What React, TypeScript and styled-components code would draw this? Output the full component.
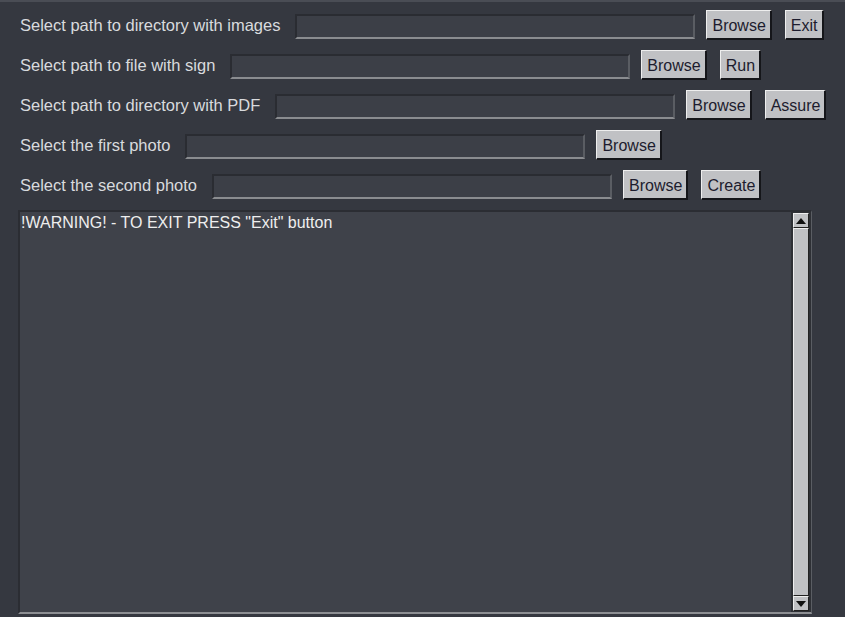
import React from "react";
import styled, { createGlobalStyle } from "styled-components";

const GlobalStyle = createGlobalStyle`
  html, body {
    margin: 0;
    padding: 0;
    background: #353840;
    overflow: hidden;
  }
  body {
    font-family: "Liberation Sans", Arial, sans-serif;
  }
`;

interface RowSpec {
  label: string;
  extra?: string;
}

const rows: RowSpec[] = [
  { label: "Select path to directory with images", extra: "Exit" },
  { label: "Select path to file with sign", extra: "Run" },
  { label: "Select path to directory with PDF", extra: "Assure" },
  { label: "Select the first photo" },
  { label: "Select the second photo", extra: "Create" },
];

function App() {
  return (
    <Window>
      <GlobalStyle />
      {rows.map((row) => (
        <Row key={row.label}>
          <Label>{row.label}</Label>
          <Entry />
          <Button>Browse</Button>
          {row.extra && <Button>{row.extra}</Button>}
        </Row>
      ))}
      <LogBox>
        <LogText>!WARNING! - TO EXIT PRESS "Exit" button</LogText>
        <ScrollBar>
          <Arrow>
            <svg width="10" height="6" viewBox="0 0 10 6">
              <path d="M0 6 L5 0 L10 6 Z" fill="#111" />
            </svg>
          </Arrow>
          <Thumb />
          <Arrow>
            <svg width="10" height="6" viewBox="0 0 10 6">
              <path d="M0 0 L5 6 L10 0 Z" fill="#111" />
            </svg>
          </Arrow>
        </ScrollBar>
      </LogBox>
    </Window>
  );
}

export default App;

const Window = styled.div`
  width: 845px;
  height: 617px;
  box-sizing: border-box;
  border-top: 2px solid #4a4d55;
  padding: 8px 0 0 18px;
  display: flex;
  flex-direction: column;
`;

const Row = styled.div`
  display: flex;
  align-items: center;
  height: 30px;
  margin-bottom: 10px;
`;

const Label = styled.div`
  color: #d9dbde;
  font-size: 16.5px;
  padding: 0 15px 0 2px;
  white-space: nowrap;
`;

const Entry = styled.div`
  width: 396px;
  height: 21px;
  margin-top: 3px;
  background: #3c3f47;
  border-top: 2px solid #2a2c32;
  border-left: 2px solid #2a2c32;
  border-bottom: 2px solid #8a8c90;
  border-right: 2px solid #5a5d63;
  margin-right: 11px;
`;

const Button = styled.div`
  height: 30px;
  box-sizing: border-box;
  padding: 2px 4px 0 5px;
  display: flex;
  align-items: center;
  background: #c0c1c4;
  color: #1d1c2e;
  font-size: 16px;
  border-top: 1px solid #eeeeee;
  border-left: 1px solid #eeeeee;
  border-bottom: 2px solid #15161a;
  border-right: 2px solid #15161a;
  margin-right: 13px;
`;

const LogBox = styled.div`
  width: 794px;
  height: 404px;
  box-sizing: border-box;
  display: flex;
  background: #3f424a;
  border-top: 2px solid #2b2d33;
  border-left: 2px solid #2b2d33;
  border-bottom: 2px solid #8d8f93;
  border-right: 1px solid #5a5d63;
`;

const LogText = styled.div`
  flex: 1;
  color: #eeeeee;
  font-size: 16px;
  padding: 2px 0 0 1px;
`;

const ScrollBar = styled.div`
  width: 20px;
  display: flex;
  flex-direction: column;
  background: #2e3035;
  box-sizing: border-box;
  padding: 1px 2px;
`;

const Arrow = styled.div`
  height: 13px;
  display: flex;
  align-items: center;
  justify-content: center;
  background: #c0c1c4;
  border-top: 1px solid #eeeeee;
  border-left: 1px solid #eeeeee;
  border-bottom: 1px solid #222;
  border-right: 1px solid #222;
`;

const Thumb = styled.div`
  flex: 1;
  background: #c0c1c4;
  border-top: 1px solid #eeeeee;
  border-left: 1px solid #eeeeee;
  border-bottom: 1px solid #222;
  border-right: 1px solid #222;
`;
